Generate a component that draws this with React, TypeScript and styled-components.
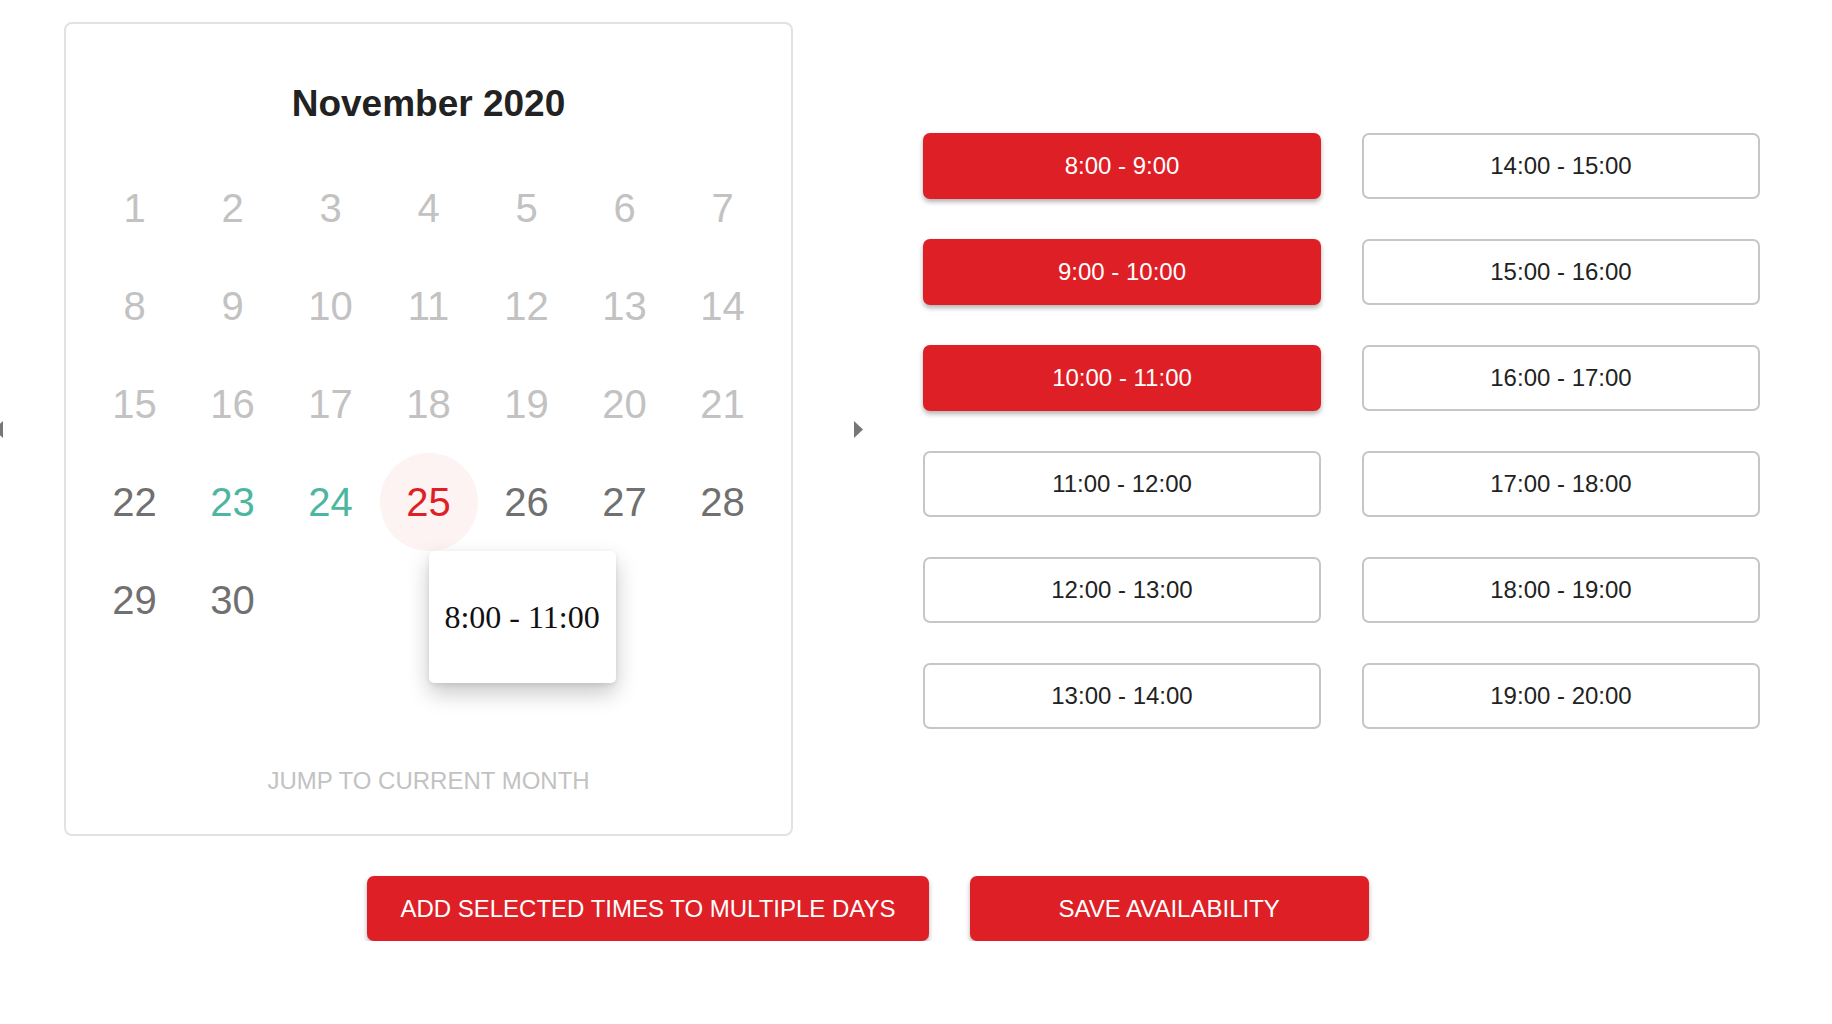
import styled, { createGlobalStyle } from 'styled-components';

const GlobalStyle = createGlobalStyle`
  html, body {
    margin: 0;
    padding: 0;
    background: #fff;
  }
  body {
    font-family: "Liberation Sans", Arial, Helvetica, sans-serif;
    overflow: hidden;
  }
`;

const Page = styled.main`
  width: 1832px;
  padding-top: 22px;
`;

const Scheduler = styled.div`
  display: flex;
  align-items: center;
`;

const ArrowButton = styled.button<{ $side: 'prev' | 'next' }>`
  display: flex;
  padding: 0;
  border: none;
  background: none;
  cursor: pointer;
  width: 9px;
  height: 17px;
  margin-left: ${({ $side }) => ($side === 'prev' ? '-6px' : '61px')};
  margin-right: ${({ $side }) => ($side === 'prev' ? '61px' : '60px')};
`;

const CalendarCard = styled.section`
  width: 729px;
  box-sizing: border-box;
  border: 2px solid #e2e2e2;
  border-radius: 8px;
  padding: 59px 0 39px;
  display: flex;
  flex-direction: column;
  align-items: center;
`;

const MonthTitle = styled.h2`
  margin: 0;
  font-size: 37px;
  font-weight: 700;
  color: #222;
`;

const DayGrid = styled.div`
  margin-top: 34px;
  display: grid;
  grid-template-columns: repeat(7, 98px);
  grid-auto-rows: 98px;
`;

type Tone = 'past' | 'open' | 'booked' | 'selected';

const toneColor: Record<Tone, string> = {
  past: '#c2c2c2',
  open: '#707070',
  booked: '#4db6a0',
  selected: '#df1f26',
};

const DayCell = styled.div<{ $tone: Tone }>`
  position: relative;
  display: flex;
  align-items: center;
  justify-content: center;
  font-size: 40px;
  color: ${({ $tone }) => toneColor[$tone]};
  border-radius: 50%;
  background: ${({ $tone }) => ($tone === 'selected' ? '#fdf3f3' : 'transparent')};
`;

const Tooltip = styled.div`
  position: absolute;
  left: 50%;
  top: 100%;
  width: 187px;
  height: 132px;
  display: flex;
  align-items: center;
  justify-content: center;
  background: #fff;
  border-radius: 5px;
  box-shadow: 0 10px 22px rgba(0, 0, 0, 0.22), 0 2px 5px rgba(0, 0, 0, 0.08);
  font-family: "Liberation Serif", "Times New Roman", serif;
  font-size: 32px;
  color: #111;
  white-space: nowrap;
  z-index: 2;
`;

const JumpLink = styled.button`
  margin-top: 118px;
  padding: 0;
  border: none;
  background: none;
  font-family: inherit;
  font-size: 24px;
  color: #c2c2c2;
  text-transform: uppercase;
  cursor: pointer;
`;

const SlotGrid = styled.div`
  display: grid;
  grid-template-columns: repeat(2, 398px);
  grid-auto-flow: column;
  grid-template-rows: repeat(6, 66px);
  column-gap: 41px;
  row-gap: 40px;
  margin-top: 3px;
`;

const SlotButton = styled.button<{ $selected?: boolean }>`
  box-sizing: border-box;
  font-family: inherit;
  font-size: 24px;
  border-radius: 7px;
  cursor: pointer;
  border: 2px solid ${({ $selected }) => ($selected ? '#df1f26' : '#c6c6c6')};
  background: ${({ $selected }) => ($selected ? '#df1f26' : '#fff')};
  color: ${({ $selected }) => ($selected ? '#fff' : '#222')};
  box-shadow: ${({ $selected }) => ($selected ? '0 3px 5px rgba(0, 0, 0, 0.3)' : 'none')};
`;

const ActionRow = styled.div`
  display: flex;
  justify-content: center;
  gap: 41px;
  padding-right: 96px;
  margin-top: 40px;
`;

const ActionButton = styled.button<{ $fixed?: boolean }>`
  box-sizing: border-box;
  height: 65px;
  padding: 0 33px;
  min-width: ${({ $fixed }) => ($fixed ? '399px' : '0')};
  border: none;
  border-radius: 7px;
  background: #df1f26;
  color: #fff;
  font-family: inherit;
  font-size: 24px;
  text-transform: uppercase;
  box-shadow: 0 3px 5px rgba(0, 0, 0, 0.3);
  cursor: pointer;
`;

const Chevron = ({ dir }: { dir: 'left' | 'right' }) => (
  <svg width="9" height="17" viewBox="0 0 9 17">
    <polygon points={dir === 'right' ? '0,0 9,8.5 0,17' : '9,0 0,8.5 9,17'} fill="#777" />
  </svg>
);

const dayTone = (d: number): Tone => {
  if (d < 22) return 'past';
  if (d === 23 || d === 24) return 'booked';
  if (d === 25) return 'selected';
  return 'open';
};

const days = Array.from({ length: 30 }, (_, i) => i + 1);

const slots = [
  '8:00 - 9:00',
  '9:00 - 10:00',
  '10:00 - 11:00',
  '11:00 - 12:00',
  '12:00 - 13:00',
  '13:00 - 14:00',
  '14:00 - 15:00',
  '15:00 - 16:00',
  '16:00 - 17:00',
  '17:00 - 18:00',
  '18:00 - 19:00',
  '19:00 - 20:00',
];
const selectedSlots = ['8:00 - 9:00', '9:00 - 10:00', '10:00 - 11:00'];

const App = () => {
  return (
    <Page>
      <GlobalStyle />
      <Scheduler>
        <ArrowButton $side="prev" aria-label="Previous month">
          <Chevron dir="left" />
        </ArrowButton>
        <CalendarCard>
          <MonthTitle>November 2020</MonthTitle>
          <DayGrid>
            {days.map((d) => (
              <DayCell key={d} $tone={dayTone(d)}>
                {d}
                {d === 25 && <Tooltip>8:00 - 11:00</Tooltip>}
              </DayCell>
            ))}
          </DayGrid>
          <JumpLink>Jump to current month</JumpLink>
        </CalendarCard>
        <ArrowButton $side="next" aria-label="Next month">
          <Chevron dir="right" />
        </ArrowButton>
        <SlotGrid>
          {slots.map((s) => (
            <SlotButton key={s} $selected={selectedSlots.includes(s)}>
              {s}
            </SlotButton>
          ))}
        </SlotGrid>
      </Scheduler>
      <ActionRow>
        <ActionButton>Add selected times to multiple days</ActionButton>
        <ActionButton $fixed>Save availability</ActionButton>
      </ActionRow>
    </Page>
  );
};

export default App;
